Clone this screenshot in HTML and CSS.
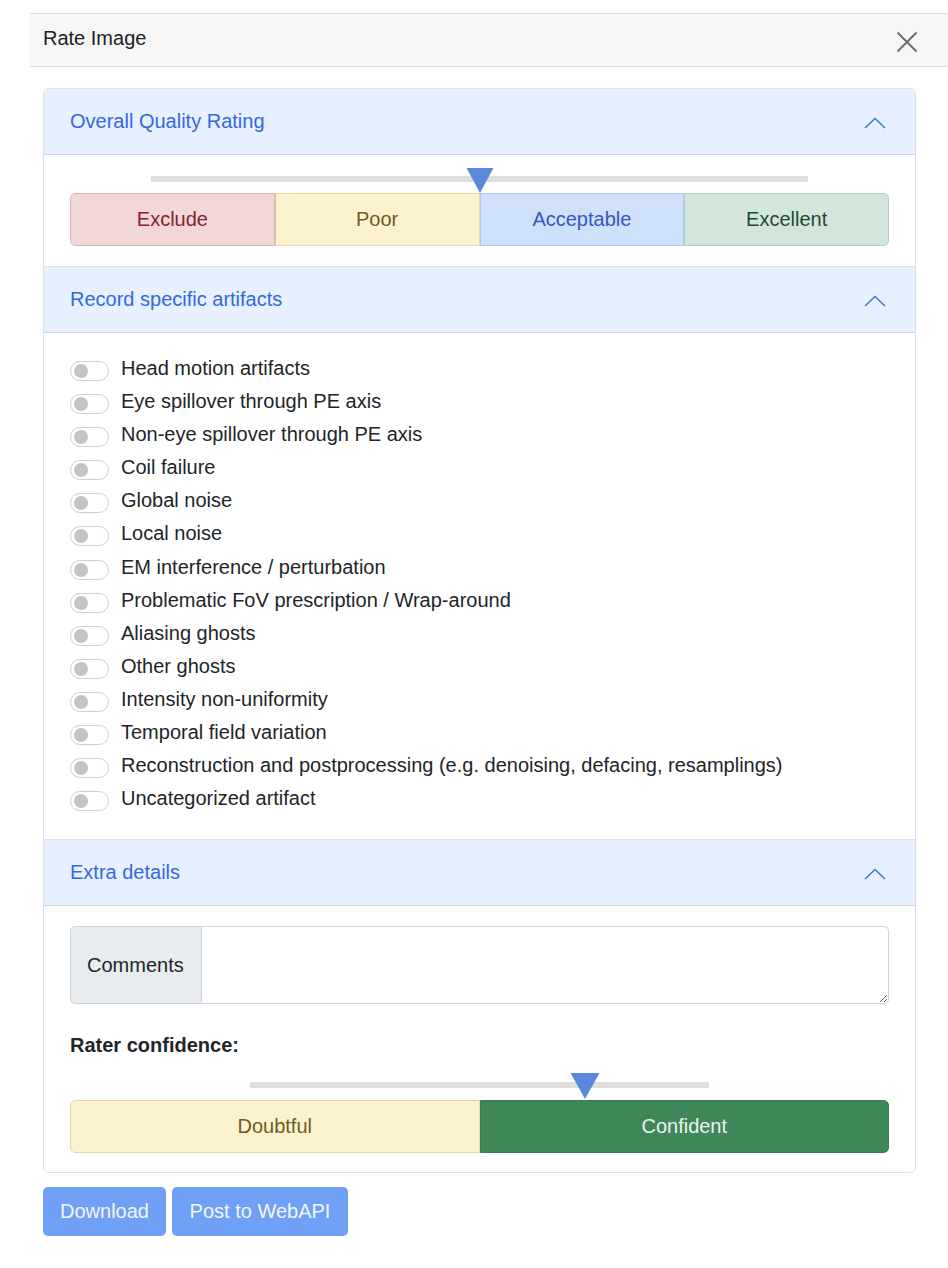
FILE: index.html
```html
<!DOCTYPE html>
<html>
<head>
<meta charset="utf-8">
<link rel="stylesheet" href="styles.css">
</head>
<body>
<div class="page">
  <div class="modal-header">
    <span class="modal-title">Rate Image</span>
    <span class="close-btn">
      <svg width="22" height="22" viewBox="0 0 22 22"><path d="M1.5 1.5 L20.5 20.5 M20.5 1.5 L1.5 20.5" stroke="#6a6a6a" stroke-width="1.8" fill="none"/></svg>
    </span>
  </div>
  <div class="modal-body">
    <div class="accordion">
      <section class="acc-item">
        <div class="acc-header">
          <span class="acc-title">Overall Quality Rating</span>
          <svg class="chev" width="22" height="12" viewBox="0 0 22 12"><polyline points="1,11 11,1.5 21,11" stroke="#3f74e4" stroke-width="1.5" fill="none"/></svg>
        </div>
        <div class="acc-body rating-body">
          <div class="slider wide">
            <div class="track"></div>
            <svg class="thumb" style="left:50%" width="27" height="25" viewBox="0 0 27 25"><polygon points="0,0 27,0 13.5,25" fill="#5b88db"/></svg>
          </div>
          <div class="seg-group">
            <div class="seg seg-exclude">Exclude</div>
            <div class="seg seg-poor">Poor</div>
            <div class="seg seg-accept">Acceptable</div>
            <div class="seg seg-excellent">Excellent</div>
          </div>
        </div>
      </section>

      <section class="acc-item">
        <div class="acc-header">
          <span class="acc-title">Record specific artifacts</span>
          <svg class="chev" width="22" height="12" viewBox="0 0 22 12"><polyline points="1,11 11,1.5 21,11" stroke="#3f74e4" stroke-width="1.5" fill="none"/></svg>
        </div>
        <div class="acc-body artifacts-body">
          <div class="check"><span class="switch"><span class="knob"></span></span><span class="check-label">Head motion artifacts</span></div>
          <div class="check"><span class="switch"><span class="knob"></span></span><span class="check-label">Eye spillover through PE axis</span></div>
          <div class="check"><span class="switch"><span class="knob"></span></span><span class="check-label">Non-eye spillover through PE axis</span></div>
          <div class="check"><span class="switch"><span class="knob"></span></span><span class="check-label">Coil failure</span></div>
          <div class="check"><span class="switch"><span class="knob"></span></span><span class="check-label">Global noise</span></div>
          <div class="check"><span class="switch"><span class="knob"></span></span><span class="check-label">Local noise</span></div>
          <div class="check"><span class="switch"><span class="knob"></span></span><span class="check-label">EM interference / perturbation</span></div>
          <div class="check"><span class="switch"><span class="knob"></span></span><span class="check-label">Problematic FoV prescription / Wrap-around</span></div>
          <div class="check"><span class="switch"><span class="knob"></span></span><span class="check-label">Aliasing ghosts</span></div>
          <div class="check"><span class="switch"><span class="knob"></span></span><span class="check-label">Other ghosts</span></div>
          <div class="check"><span class="switch"><span class="knob"></span></span><span class="check-label">Intensity non-uniformity</span></div>
          <div class="check"><span class="switch"><span class="knob"></span></span><span class="check-label">Temporal field variation</span></div>
          <div class="check"><span class="switch"><span class="knob"></span></span><span class="check-label">Reconstruction and postprocessing (e.g. denoising, defacing, resamplings)</span></div>
          <div class="check"><span class="switch"><span class="knob"></span></span><span class="check-label">Uncategorized artifact</span></div>
        </div>
      </section>

      <section class="acc-item">
        <div class="acc-header">
          <span class="acc-title">Extra details</span>
          <svg class="chev" width="22" height="12" viewBox="0 0 22 12"><polyline points="1,11 11,1.5 21,11" stroke="#3f74e4" stroke-width="1.5" fill="none"/></svg>
        </div>
        <div class="acc-body extra-body">
          <div class="input-group">
            <span class="input-label">Comments</span>
            <textarea class="comments"></textarea>
          </div>
          <div class="conf-label">Rater confidence:</div>
          <div class="slider narrow">
            <div class="track"></div>
            <svg class="thumb" style="left:73%" width="29" height="26" viewBox="0 0 29 26"><polygon points="0,0 29,0 14.5,26" fill="#5b88db"/></svg>
          </div>
          <div class="seg-group">
            <div class="seg seg-doubt">Doubtful</div>
            <div class="seg seg-confident">Confident</div>
          </div>
        </div>
      </section>
    </div>
    <div class="actions">
      <span class="btn btn-download">Download</span>
      <span class="btn btn-post">Post to WebAPI</span>
    </div>
  </div>
</div>
</body>
</html>
```
FILE: styles.css
```css
* { box-sizing: border-box; }
html, body { margin: 0; padding: 0; background: #fff; }
body {
  font-family: "Liberation Sans", Arial, sans-serif;
  font-size: 20px;
  color: #212529;
}
.page {
  padding-top: 13px;
  margin-left: 30px;
}
.modal-header {
  height: 54px;
  background: #f6f6f6;
  border-top: 1px solid #dcdcdc;
  border-bottom: 1px solid #dcdcdc;
  display: flex;
  align-items: center;
  justify-content: space-between;
  padding: 0 30px 0 13px;
}
.modal-title {
  font-size: 20px;
  color: #222;
  margin-top: -4px;
}
.close-btn {
  display: flex;
  width: 22px;
  height: 22px;
  margin-top: 4px;
}
.modal-body {
  padding: 21px 32px 0 13px;
}
.accordion {
  border: 1px solid #dee2e6;
  border-radius: 6px;
  overflow: hidden;
}
.acc-item + .acc-item {
  border-top: 1px solid #dee2e6;
}
.acc-header {
  height: 66px;
  background: #e7f0fe;
  box-shadow: inset 0 -1px 0 #cdd5e2;
  display: flex;
  align-items: center;
  justify-content: space-between;
  padding: 0 29px 0 26px;
}
.acc-title {
  color: #3468e0;
  font-size: 20px;
  margin-top: -2px;
}
.chev { display: block; margin-top: 2px; }
.acc-body {
  padding: 0 26px;
}
.rating-body {
  padding-top: 13px;
  padding-bottom: 20px;
}
.slider {
  position: relative;
  display: flow-root;
  margin: 0 auto;
  height: 25px;
}
.slider.wide { width: 657px; }
.slider.narrow { width: 459px; height: 27px; margin-top: 13px; }
.track {
  height: 6px;
  margin-top: 8px;
  background: #dedede;
}
.slider.narrow .track { margin-top: 9px; }
.thumb {
  position: absolute;
  top: 0;
  transform: translateX(-50%);
  display: block;
}
.seg-group {
  display: flex;
  height: 53px;
  border-radius: 5px;
  overflow: hidden;
}
.seg {
  flex: 1;
  display: flex;
  align-items: center;
  justify-content: center;
  font-size: 20px;
  border: 1px solid;
}
.seg-group .seg:first-child { border-radius: 5px 0 0 5px; }
.seg-group .seg:last-child { border-radius: 0 5px 5px 0; }
.seg-exclude { background: #f2d6d8; border-color: #d9b5b9; color: #842332; }
.seg-poor { background: #fdf2cf; border-color: #e6d8a9; color: #6e5b22; border-left-color: #d9c5a8; }
.seg-accept { background: #cfe0fa; border-color: #b5c9ee; color: #3558bd; }
.seg-excellent { background: #d3e6dc; border-color: #b7cfc2; color: #1f4b2d; }
.seg-doubt { background: #fdf2cf; border-color: #e6d6a6; color: #6e5b22; }
.seg-confident { background: #3f8659; border-color: #3a7d53; color: #eaf4ec; }
.artifacts-body {
  padding-top: 20px;
  padding-bottom: 23px;
}
.check {
  display: flex;
  align-items: center;
  line-height: 30px;
  margin-bottom: 3.1px;
}
.switch {
  display: flex;
  align-items: center;
  width: 39px;
  height: 20px;
  border: 1px solid #cfcfcf;
  border-radius: 10px;
  background: #fff;
  margin-top: 6px;
  padding-left: 3px;
  flex-shrink: 0;
}
.knob {
  width: 14px;
  height: 14px;
  border-radius: 50%;
  background: #c4c4c4;
}
.check-label {
  margin-left: 12px;
  color: #212529;
}
.extra-body {
  padding-top: 20px;
  padding-bottom: 19px;
}
.input-group {
  display: flex;
  height: 78px;
}
.input-label {
  width: 132px;
  background: #e9ecef;
  border: 1px solid #ced4da;
  border-radius: 5px 0 0 5px;
  display: flex;
  align-items: center;
  padding-left: 16px;
  color: #212529;
  font-size: 20px;
}
.comments {
  flex: 1;
  border: 1px solid #ced4da;
  border-left: none;
  border-radius: 0 5px 5px 0;
  resize: vertical;
  font-family: "Liberation Sans", Arial, sans-serif;
  font-size: 20px;
  outline: none;
  margin: 0;
}
.conf-label {
  font-weight: bold;
  line-height: 30px;
  margin-top: 26px;
  color: #212529;
}
.actions {
  display: flex;
  gap: 6px;
  margin-top: 14px;
}
.btn {
  height: 49px;
  display: flex;
  align-items: center;
  justify-content: center;
  background: #70a0f6;
  color: #f3f7ff;
  border-radius: 5px;
  font-size: 20px;
}
.btn-download { width: 123px; }
.btn-post { width: 176px; }
```
